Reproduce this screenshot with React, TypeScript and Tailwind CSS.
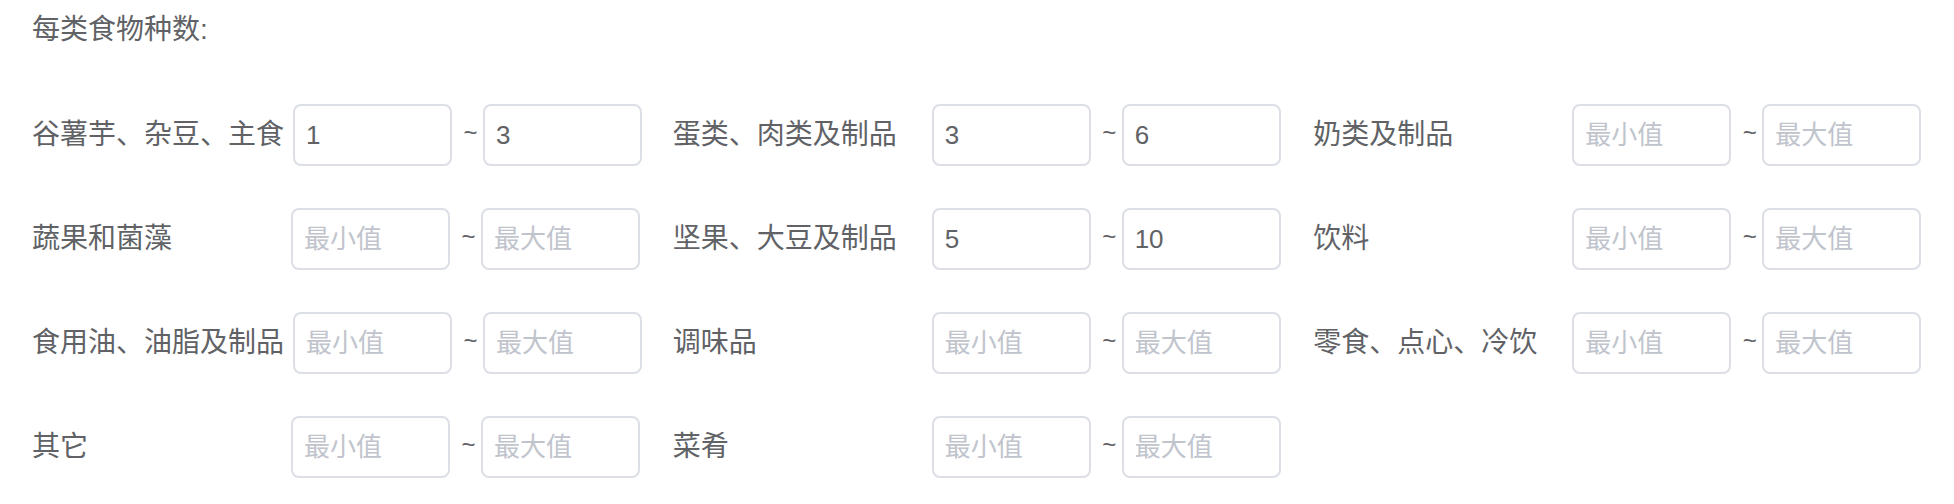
const rows: { label: string; min?: string; max?: string }[][] = [
  [
    { label: "谷薯芋、杂豆、主食", min: "1", max: "3" },
    { label: "蛋类、肉类及制品", min: "3", max: "6" },
    { label: "奶类及制品" },
  ],
  [
    { label: "蔬果和菌藻" },
    { label: "坚果、大豆及制品", min: "5", max: "10" },
    { label: "饮料" },
  ],
  [
    { label: "食用油、油脂及制品" },
    { label: "调味品" },
    { label: "零食、点心、冷饮" },
  ],
  [{ label: "其它" }, { label: "菜肴" }],
];

function RangeField({ label, min, max }: { label: string; min?: string; max?: string }) {
  return (
    <div className="flex items-center h-[62px]">
      <span className="min-w-[250px] mr-[9px] shrink-0 whitespace-nowrap text-[28px] text-[#606266]">
        {label}
      </span>
      <input
        defaultValue={min}
        placeholder="最小值"
        className="w-[159px] h-[62px] shrink-0 rounded-[8px] border-2 border-[#dcdfe6] bg-white px-[11px] text-[26px] text-[#606266] placeholder:text-[#c0c4cc] outline-none"
      />
      <span className="w-[31px] shrink-0 text-center text-[24px] text-[#606266] pl-[6px] -mt-[4px]">~</span>
      <input
        defaultValue={max}
        placeholder="最大值"
        className="w-[159px] h-[62px] shrink-0 rounded-[8px] border-2 border-[#dcdfe6] bg-white px-[11px] text-[26px] text-[#606266] placeholder:text-[#c0c4cc] outline-none"
      />
    </div>
  );
}

export default function App() {
  return (
    <main
      className="min-h-screen bg-white pt-[9px] pl-8"
      style={{ fontFamily: '"Liberation Sans", "Noto Sans CJK SC", sans-serif' }}
    >
      <h2 className="h-[42px] leading-[42px] text-[28px] text-[#606266] mb-[53px]">每类食物种数:</h2>
      <div className="grid grid-cols-3 gap-y-[42px]">
        {rows.flat().map((f) => (
          <RangeField key={f.label} {...f} />
        ))}
      </div>
    </main>
  );
}
